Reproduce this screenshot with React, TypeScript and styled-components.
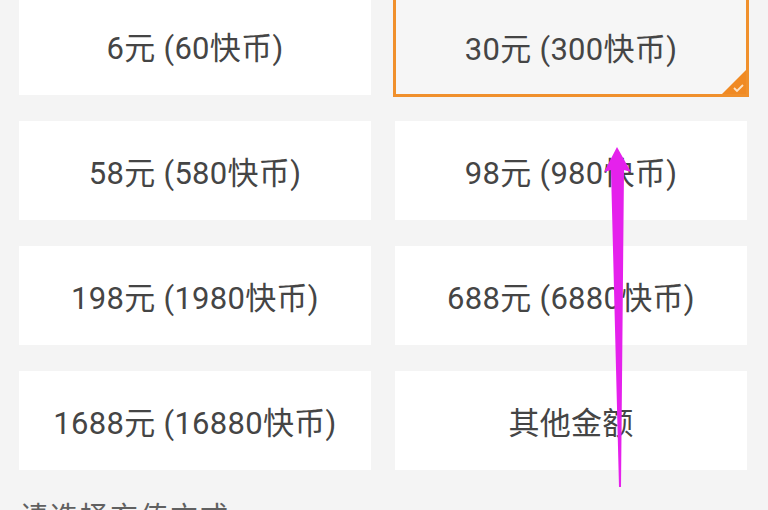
import React from 'react';
import styled, { createGlobalStyle } from 'styled-components';

const GlobalStyle = createGlobalStyle`
  html, body {
    margin: 0;
    padding: 0;
    background: #f4f4f4;
    overflow: hidden;
  }
  body {
    font-family: Roboto, "Noto Sans CJK SC", sans-serif;
  }
`;

const options = [
  { label: '6元 (60快币)' },
  { label: '30元 (300快币)', selected: true },
  { label: '58元 (580快币)' },
  { label: '98元 (980快币)' },
  { label: '198元 (1980快币)' },
  { label: '688元 (6880快币)' },
  { label: '1688元 (16880快币)' },
  { label: '其他金额' },
];

function App() {
  return (
    <Page>
      <GlobalStyle />
      <Grid>
        {options.map((o) => (
          <Card key={o.label} $selected={!!o.selected}>
            {o.label}
            {o.selected && (
              <Corner viewBox="0 0 24 24">
                <polygon points="24,0 24,24 0,24" fill="#f08a24" />
                <polyline points="12,18 15,21 21,15" fill="none" stroke="#fde4c8" strokeWidth="1.8" />
              </Corner>
            )}
          </Card>
        ))}
      </Grid>
      <Hint>请选择充值方式</Hint>
      <Arrow viewBox="0 0 768 510">
        <polygon
          points="617,147 631,172 624,170 621,487 619,487 611,170 604,172"
          fill="#e521ec"
        />
      </Arrow>
    </Page>
  );
}

export default App;

const Page = styled.div`
  position: relative;
  width: 768px;
  height: 510px;
  overflow: hidden;
`;

const Grid = styled.div`
  display: grid;
  grid-template-columns: 1fr 1fr;
  grid-auto-rows: 99px;
  column-gap: 24px;
  row-gap: 26px;
  padding: 0 21px 0 19px;
  margin-top: -4px;
`;

const Card = styled.div<{ $selected: boolean }>`
  position: relative;
  display: flex;
  align-items: center;
  justify-content: center;
  background: ${({ $selected }) => ($selected ? '#f6f6f6' : '#ffffff')};
  border: ${({ $selected }) => ($selected ? '3px solid #f0902c' : 'none')};
  margin: ${({ $selected }) => ($selected ? '0 -2px -2px -2px' : '0')};
  color: #454545;
  font-size: 31px;
  letter-spacing: 0.3px;
`;

const Corner = styled.svg`
  position: absolute;
  right: 0;
  bottom: 0;
  width: 24px;
  height: 24px;
`;

const Hint = styled.div`
  margin: 31px 0 0 20px;
  color: #606060;
  font-size: 28px;
  letter-spacing: 2px;
  line-height: 1.2;
`;

const Arrow = styled.svg`
  position: absolute;
  left: 0;
  top: 0;
  width: 768px;
  height: 510px;
  pointer-events: none;
`;
